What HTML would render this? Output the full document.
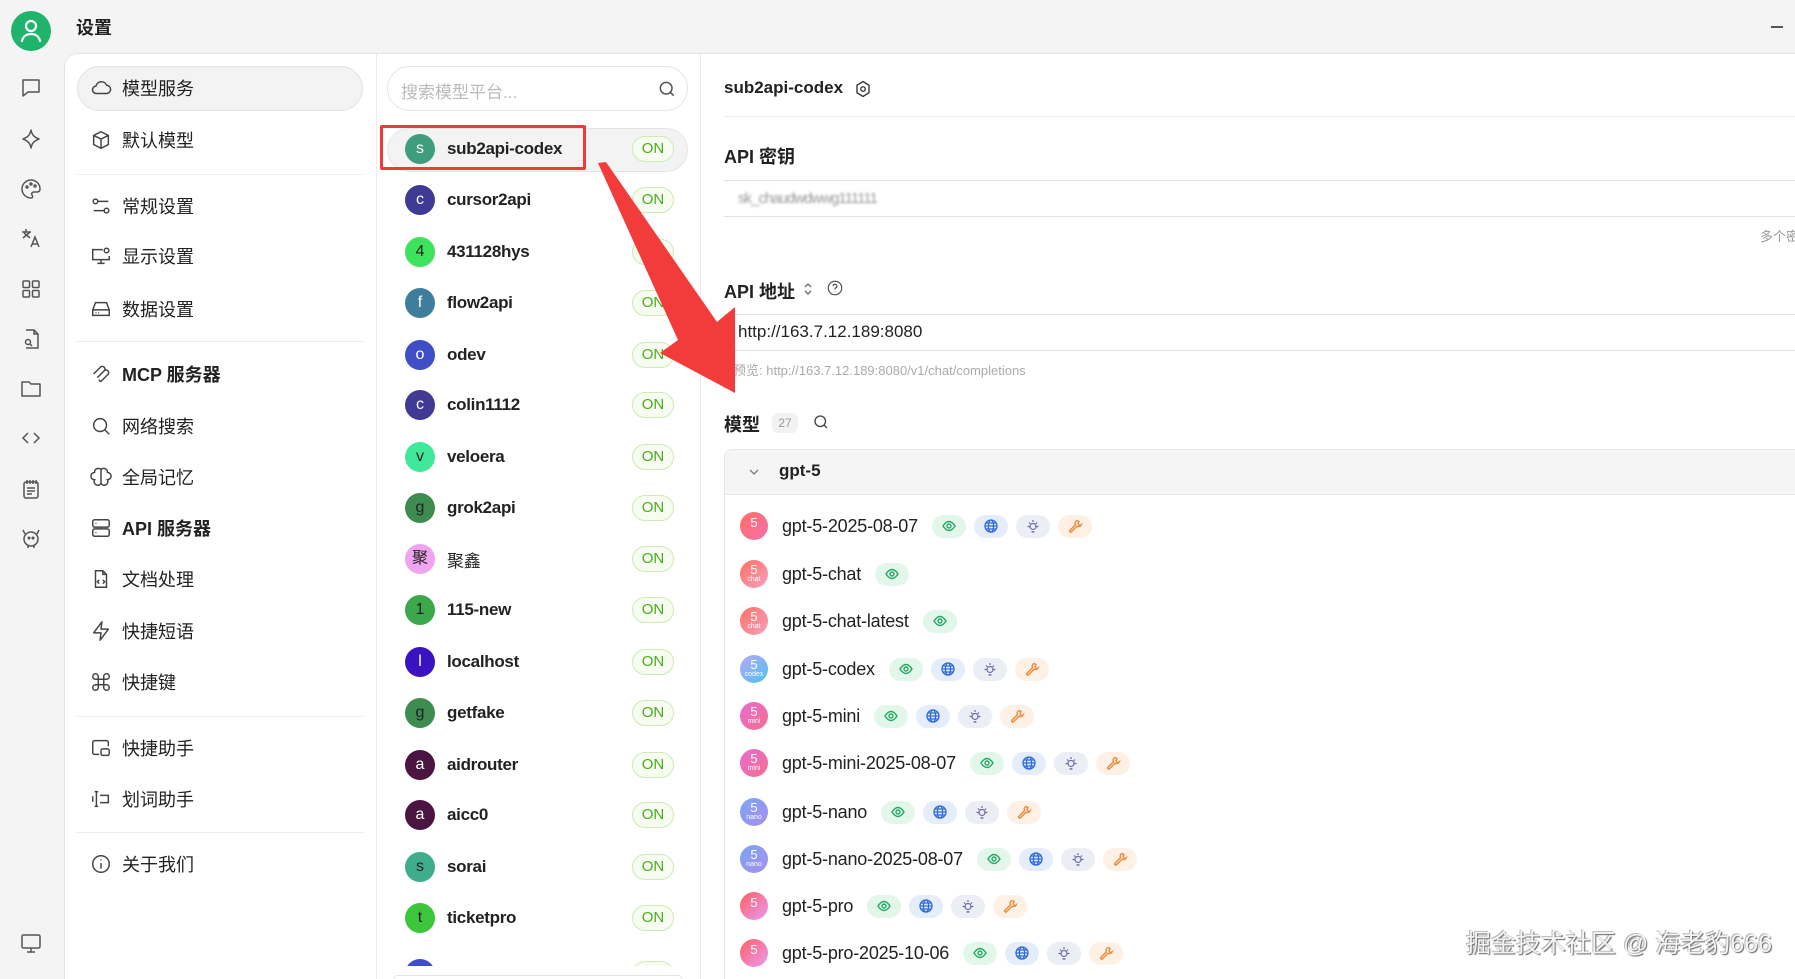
<!DOCTYPE html>
<html style="overflow:hidden"><head><meta charset="utf-8"><style>
*{margin:0;padding:0;box-sizing:border-box}
body{width:1795px;height:979px;overflow:hidden;background:#f4f4f4;font-family:"Liberation Sans","Noto Sans CJK SC",sans-serif;color:#222;position:relative}
.abs{position:absolute}
svg{display:block}
.ic{position:absolute;left:19px;width:24px;height:24px}
.panel{position:absolute;left:64px;top:53px;width:1740px;height:940px;background:#fff;border-top:1px solid #e4e4e4;border-left:1px solid #e4e4e4;border-top-left-radius:14px}
.nav{position:absolute;left:0;width:376px;height:44px;display:flex;align-items:center;font-size:18px;color:#222}
.nav svg{position:absolute;left:90px;width:22px;height:22px}
.nav span{position:absolute;left:122px;white-space:nowrap}
.div{position:absolute;height:1px;background:#ececec}
.prow{position:absolute;left:387px;width:300px;height:44px}
.pav{position:absolute;left:18px;top:7px;width:30px;height:30px;border-radius:50%;color:#fff;font-size:16px;text-align:center;line-height:30px}
.pname{position:absolute;left:60px;top:12px;font-size:17px;font-weight:bold;color:#222;letter-spacing:-0.3px;white-space:nowrap}
.on{position:absolute;left:245px;top:9px;width:42px;height:26px;border:1px solid #cfe9b9;background:#f6fdf0;border-radius:13px;color:#4caa22;font-size:15px;text-align:center;line-height:24px}
.mrow{position:absolute;left:740px;height:40px;display:flex;align-items:center;white-space:nowrap;width:1000px}
.mav{width:28px;height:28px;border-radius:50%;color:#fff;font-size:13px;text-align:center;line-height:13px;padding-top:3px;margin-right:14px;flex:none}
.mav small{display:block;font-size:7px;line-height:8px}
.mname{font-size:18px;color:#222;margin-right:14px;letter-spacing:-0.2px;white-space:nowrap;flex:none}
.tag{width:34px;height:23px;border-radius:12px;margin-right:8px;display:flex;align-items:center;justify-content:center;flex:none}
.t1{background:#e2f6ea}.t2{background:#e5edfb}.t3{background:#eceef5}.t4{background:#fdf0e5}
</style></head><body>

<div class="abs" style="left:11px;top:11px;width:40px;height:40px;border-radius:50%;background:#1fb36b">
<svg width="40" height="40" viewBox="0 0 40 40"><circle cx="20" cy="15" r="5" fill="none" stroke="#fff" stroke-width="2.2"/><path d="M11 30c1-5 5-7 9-7s8 2 9 7" fill="none" stroke="#fff" stroke-width="2.2" stroke-linecap="round"/></svg></div>
<div class="abs" style="left:76px;top:14px;font-size:18px;font-weight:bold">设置</div>
<div class="abs" style="left:1771px;top:26px;width:12px;height:1.5px;background:#555"></div>

<svg class="ic" style="top:76px" viewBox="0 0 24 24" fill="none" stroke="#555" stroke-width="1.5"><path d="M4 4h16v12H9l-5 4z" stroke-linejoin="round"/></svg>
<svg class="ic" style="top:127px" viewBox="0 0 24 24" fill="none" stroke="#555" stroke-width="1.5"><path d="M12 3c1 5 3 7 8 9-5 2-7 4-8 9-1-5-3-7-8-9 5-2 7-4 8-9z" stroke-linejoin="round"/></svg>
<svg class="ic" style="top:177px" viewBox="0 0 24 24" fill="none" stroke="#555" stroke-width="1.5"><path d="M12 3a9 9 0 1 0 0 18c2 0 2-2 1-3s0-3 2-3h3c2 0 3-1 3-3 0-5-4-9-9-9z"/><circle cx="8" cy="10" r="1"/><circle cx="12" cy="7" r="1"/><circle cx="16" cy="9" r="1"/></svg>
<svg class="ic" style="top:226px" viewBox="0 0 24 24" fill="none" stroke="#555" stroke-width="1.5"><path d="M3 6h9M7 3v3M4 12l7-6M5 7l6 5M12 21l4-10 4 10M13.5 18h5"/></svg>
<svg class="ic" style="top:277px" viewBox="0 0 24 24" fill="none" stroke="#555" stroke-width="1.5"><rect x="4" y="4" width="6.5" height="6.5" rx="1"/><rect x="13.5" y="4" width="6.5" height="6.5" rx="1"/><rect x="4" y="13.5" width="6.5" height="6.5" rx="1"/><rect x="13.5" y="13.5" width="6.5" height="6.5" rx="1"/></svg>
<svg class="ic" style="top:327px" viewBox="0 0 24 24" fill="none" stroke="#555" stroke-width="1.5"><path d="M7 3h8l4 4v14H7"/><path d="M15 3v4h4"/><circle cx="9" cy="15" r="2.5"/><path d="M11 17l2 2"/></svg>
<svg class="ic" style="top:376px" viewBox="0 0 24 24" fill="none" stroke="#555" stroke-width="1.5"><path d="M3 6h7l2 2h9v12H3z" stroke-linejoin="round"/></svg>
<svg class="ic" style="top:426px" viewBox="0 0 24 24" fill="none" stroke="#555" stroke-width="1.5"><path d="M9 7l-5 5 5 5M15 7l5 5-5 5"/></svg>
<svg class="ic" style="top:477px" viewBox="0 0 24 24" fill="none" stroke="#555" stroke-width="1.5"><rect x="5" y="5" width="14" height="16" rx="2"/><path d="M8 3v4M11 3v4M14 3v4M17 3v4M8 11h8M8 14h8M8 17h5"/></svg>
<svg class="ic" style="top:526px" viewBox="0 0 24 24" fill="none" stroke="#555" stroke-width="1.5"><circle cx="12" cy="13" r="7"/><path d="M6 8L4 4M18 8l2-4M9 20v2M15 20v2"/><circle cx="10" cy="12" r=".8" fill="#555"/><circle cx="14" cy="12" r=".8" fill="#555"/></svg>
<svg class="ic" style="top:931px" viewBox="0 0 24 24" fill="none" stroke="#555" stroke-width="1.5"><rect x="3" y="4" width="18" height="13" rx="1.5"/><path d="M12 17v4M8 21h8"/></svg>

<div class="panel"></div>
<div class="abs" style="left:376px;top:54px;width:1px;height:925px;background:#ececec"></div>
<div class="abs" style="left:700px;top:54px;width:1px;height:925px;background:#ececec"></div>

<div class="abs" style="left:77px;top:66px;width:286px;height:45px;border-radius:23px;background:#f3f3f3;border:1px solid #e2e2e2"></div>
<div class="nav" style="top:66px"><svg viewBox="0 0 24 24" fill="none" stroke="#444" stroke-width="1.6"><path d="M7 18a4 4 0 0 1-.5-8A6 6 0 0 1 18 9a4.5 4.5 0 0 1 0 9z"/></svg><span>模型服务</span></div>
<div class="nav" style="top:118px"><svg viewBox="0 0 24 24" fill="none" stroke="#444" stroke-width="1.6"><path d="M12 3l8 4v10l-8 4-8-4V7zM4 7l8 4 8-4M12 11v10"/></svg><span>默认模型</span></div>
<div class="div" style="left:77px;top:174px;width:286px"></div>
<div class="nav" style="top:184px"><svg viewBox="0 0 24 24" fill="none" stroke="#444" stroke-width="1.6"><circle cx="6" cy="7" r="2.5"/><path d="M9 7h11M4 17h11"/><circle cx="18" cy="17" r="2.5"/></svg><span>常规设置</span></div>
<div class="nav" style="top:234px"><svg viewBox="0 0 24 24" fill="none" stroke="#444" stroke-width="1.6"><path d="M14 5H3v11h18v-4M12 16v4M8 20h8"/><circle cx="18" cy="6" r="2.5"/></svg><span>显示设置</span></div>
<div class="nav" style="top:287px"><svg viewBox="0 0 24 24" fill="none" stroke="#444" stroke-width="1.6"><path d="M3 13l3-8h12l3 8v6H3zM3 13h18M6 16h1M9 16h1"/></svg><span>数据设置</span></div>
<div class="div" style="left:77px;top:341px;width:286px"></div>
<div class="nav" style="top:352px"><svg viewBox="0 0 24 24" fill="none" stroke="#444" stroke-width="1.6"><path d="M4 12l8-8a3 3 0 0 1 4 4l-7 7M8 16l8-8a3 3 0 0 1 4 4l-8 8a2 2 0 0 1-2-2"/></svg><span style="font-weight:bold">MCP 服务器</span></div>
<div class="nav" style="top:404px"><svg viewBox="0 0 24 24" fill="none" stroke="#444" stroke-width="1.6"><circle cx="11" cy="11" r="7"/><path d="M16 16l5 5"/></svg><span>网络搜索</span></div>
<div class="nav" style="top:455px"><svg viewBox="0 0 24 24" fill="none" stroke="#444" stroke-width="1.6"><path d="M12 4a4 4 0 0 0-7 3 4 4 0 0 0 0 8 4 4 0 0 0 7 4zM12 4a4 4 0 0 1 7 3 4 4 0 0 1 0 8 4 4 0 0 1-7 4zM12 4v16"/></svg><span>全局记忆</span></div>
<div class="nav" style="top:506px"><svg viewBox="0 0 24 24" fill="none" stroke="#444" stroke-width="1.6"><rect x="3" y="3" width="18" height="8" rx="2"/><rect x="3" y="13" width="18" height="8" rx="2"/><path d="M6 7h1M6 17h1"/></svg><span style="font-weight:bold">API 服务器</span></div>
<div class="nav" style="top:557px"><svg viewBox="0 0 24 24" fill="none" stroke="#444" stroke-width="1.6"><path d="M14 3H6v18h12V7zM14 3v4h4M10 13l-2 2 2 2M14 13l2 2-2 2"/></svg><span>文档处理</span></div>
<div class="nav" style="top:609px"><svg viewBox="0 0 24 24" fill="none" stroke="#444" stroke-width="1.6"><path d="M13 2L4 14h8l-1 8 9-12h-8z" stroke-linejoin="round"/></svg><span>快捷短语</span></div>
<div class="nav" style="top:660px"><svg viewBox="0 0 24 24" fill="none" stroke="#444" stroke-width="1.6"><path d="M9 9V6a3 3 0 1 0-3 3h12a3 3 0 1 0-3-3v12a3 3 0 1 0 3-3H6a3 3 0 1 0 3 3z"/></svg><span>快捷键</span></div>
<div class="div" style="left:77px;top:716px;width:286px"></div>
<div class="nav" style="top:726px"><svg viewBox="0 0 24 24" fill="none" stroke="#444" stroke-width="1.6"><path d="M10 19H5a2 2 0 0 1-2-2V6a2 2 0 0 1 2-2h13a2 2 0 0 1 2 2v4"/><rect x="12" y="13" width="9" height="7" rx="2"/></svg><span>快捷助手</span></div>
<div class="nav" style="top:777px"><svg viewBox="0 0 24 24" fill="none" stroke="#444" stroke-width="1.6"><path d="M7 4v16M5 4h4M5 20h4M11 8h9v8h-9M3 9v6"/></svg><span>划词助手</span></div>
<div class="div" style="left:77px;top:832px;width:286px"></div>
<div class="nav" style="top:842px"><svg viewBox="0 0 24 24" fill="none" stroke="#444" stroke-width="1.6"><circle cx="12" cy="12" r="9"/><path d="M12 11v6M12 7v1"/></svg><span>关于我们</span></div>

<div class="abs" style="left:387px;top:66px;width:301px;height:45px;border-radius:23px;border:1px solid #e6e6e6"></div>
<div class="abs" style="left:401px;top:78px;font-size:17px;color:#bbb">搜索模型平台...</div>
<svg class="abs" style="left:657px;top:79px" width="20" height="20" viewBox="0 0 24 24" fill="none" stroke="#555" stroke-width="1.8"><circle cx="11" cy="11" r="7"/><path d="M16 16l4 4"/></svg>

<div class="abs" style="left:387px;top:128px;width:301px;height:44px;border-radius:22px;background:#f3f3f3;border:1px solid #e4e4e4"></div>
<div class="prow" style="top:127px"><div class="pav" style="background:#3e9d7c">s</div><div class="pname">sub2api-codex</div><div class="on">ON</div></div>
<div class="prow" style="top:178px"><div class="pav" style="background:#3f3a93">c</div><div class="pname">cursor2api</div><div class="on">ON</div></div>
<div class="prow" style="top:230px"><div class="pav" style="background:#3ee35d;color:#222">4</div><div class="pname">431128hys</div><div class="on">ON</div></div>
<div class="prow" style="top:281px"><div class="pav" style="background:#3e7e9c">f</div><div class="pname">flow2api</div><div class="on">ON</div></div>
<div class="prow" style="top:333px"><div class="pav" style="background:#3d4ec6">o</div><div class="pname">odev</div><div class="on">ON</div></div>
<div class="prow" style="top:383px"><div class="pav" style="background:#403a95">c</div><div class="pname">colin1112</div><div class="on">ON</div></div>
<div class="prow" style="top:435px"><div class="pav" style="background:#40e89a;color:#222">v</div><div class="pname">veloera</div><div class="on">ON</div></div>
<div class="prow" style="top:486px"><div class="pav" style="background:#3f8c50;color:#222">g</div><div class="pname">grok2api</div><div class="on">ON</div></div>
<div class="prow" style="top:537px"><div class="pav" style="background:#f0a3ef;color:#222">聚</div><div class="pname" style="font-weight:normal;top:10px">聚鑫</div><div class="on">ON</div></div>
<div class="prow" style="top:588px"><div class="pav" style="background:#3aa84b;color:#222">1</div><div class="pname">115-new</div><div class="on">ON</div></div>
<div class="prow" style="top:640px"><div class="pav" style="background:#3a12c2">l</div><div class="pname">localhost</div><div class="on">ON</div></div>
<div class="prow" style="top:691px"><div class="pav" style="background:#3f8c50;color:#222">g</div><div class="pname">getfake</div><div class="on">ON</div></div>
<div class="prow" style="top:743px"><div class="pav" style="background:#4b1541">a</div><div class="pname">aidrouter</div><div class="on">ON</div></div>
<div class="prow" style="top:793px"><div class="pav" style="background:#4b1541">a</div><div class="pname">aicc0</div><div class="on">ON</div></div>
<div class="prow" style="top:845px"><div class="pav" style="background:#3fac8c;color:#222">s</div><div class="pname">sorai</div><div class="on">ON</div></div>
<div class="prow" style="top:896px"><div class="pav" style="background:#3dc53b;color:#222">t</div><div class="pname">ticketpro</div><div class="on">ON</div></div>
<div class="abs" style="left:387px;top:944px;width:301px;height:22px;overflow:hidden"><div class="prow" style="left:0;top:8px"><div class="pav" style="background:#3d4ec6"></div><div class="on"></div></div></div>
<div class="abs" style="left:393px;top:975px;width:290px;height:10px;border-radius:8px;border:1px solid #e4e4e4"></div>

<div class="abs" style="left:380px;top:125px;width:206px;height:45px;border:3px solid #f03a3a;border-radius:2px"></div>

<div class="abs" style="left:724px;top:78px;font-size:17px;font-weight:bold">sub2api-codex</div>
<svg class="abs" style="left:854px;top:80px" width="18" height="18" viewBox="0 0 24 24" fill="none" stroke="#333" stroke-width="1.8"><path d="M12 2l8 5v10l-8 5-8-5V7z"/><circle cx="12" cy="12" r="3"/></svg>
<div class="div" style="left:724px;top:116px;width:1071px"></div>
<div class="abs" style="left:724px;top:143px;font-size:18px;font-weight:bold">API 密钥</div>
<div class="abs" style="left:724px;top:180px;width:1071px;height:37px;border-top:1px solid #e2e2e2;border-bottom:1px solid #e2e2e2"></div>
<div class="abs" style="left:738px;top:190px;font-size:15px;color:#999;letter-spacing:-1px;filter:blur(1.2px)">sk_chaudwdwwg111111</div>
<div class="abs" style="left:1760px;top:226px;font-size:13px;color:#999;white-space:nowrap">多个密</div>
<div class="abs" style="left:724px;top:278px;font-size:18px;font-weight:bold">API 地址</div>
<svg class="abs" style="left:800px;top:280px" width="16" height="18" viewBox="0 0 16 18" fill="none" stroke="#666" stroke-width="1.3"><path d="M5 7l3-3 3 3M5 11l3 3 3-3"/></svg>
<svg class="abs" style="left:826px;top:279px" width="18" height="18" viewBox="0 0 24 24" fill="none" stroke="#555" stroke-width="1.6"><circle cx="12" cy="12" r="9"/><path d="M9.5 9.5a2.5 2.5 0 1 1 3.5 2.3c-.7.3-1 .8-1 1.5V14M12 17v.5"/></svg>
<div class="abs" style="left:724px;top:314px;width:1071px;height:37px;border-top:1px solid #e2e2e2;border-bottom:1px solid #e2e2e2"></div>
<div class="abs" style="left:738px;top:322px;font-size:17px;color:#222">http://163.7.12.189:8080</div>
<div class="abs" style="left:733px;top:360px;font-size:13px;color:#aaa">预览: http://163.7.12.189:8080/v1/chat/completions</div>
<div class="abs" style="left:724px;top:411px;font-size:18px;font-weight:bold">模型</div>
<div class="abs" style="left:772px;top:413px;width:26px;height:20px;border-radius:6px;background:#f2f2f2;color:#999;font-size:12px;text-align:center;line-height:20px">27</div>
<svg class="abs" style="left:812px;top:413px" width="18" height="18" viewBox="0 0 24 24" fill="none" stroke="#444" stroke-width="1.8"><circle cx="11" cy="11" r="7"/><path d="M16 16l4 4"/></svg>

<div class="abs" style="left:724px;top:449px;width:1080px;height:540px;border:1px solid #e6e6e6;border-radius:8px"></div>
<div class="abs" style="left:725px;top:450px;width:1070px;height:45px;background:#f5f5f5;border-bottom:1px solid #e6e6e6;border-top-left-radius:8px"></div>
<svg class="abs" style="left:747px;top:465px" width="14" height="14" viewBox="0 0 14 14" fill="none" stroke="#777" stroke-width="1.3"><path d="M3 5l4 4 4-4"/></svg>
<div class="abs" style="left:779px;top:461px;font-size:17px;font-weight:bold">gpt-5</div>

<svg width="0" height="0" style="position:absolute;left:0;top:0">
<defs>
<g id="eye"><path d="M2 8c2-3 4-4.5 6-4.5S12 5 14 8c-2 3-4 4.5-6 4.5S4 11 2 8z" fill="none" stroke="#27a766" stroke-width="1.4"/><circle cx="8" cy="8" r="2" fill="none" stroke="#27a766" stroke-width="1.4"/></g>
<g id="globe" fill="none" stroke="#2f6ad8" stroke-width="1.3"><circle cx="8" cy="8" r="6"/><ellipse cx="8" cy="8" rx="2.6" ry="6"/><path d="M2 8h12M3 5h10M3 11h10"/></g>
<g id="sun" fill="none" stroke="#6a6ea6" stroke-width="1.2"><circle cx="8" cy="8.5" r="3"/><path d="M8 2v2M8 13v1.5M2.5 8.5h2M11.5 8.5h2M4 4.5l1.3 1.3M12 4.5l-1.3 1.3M6.5 14h3"/></g>
<g id="wr" fill="none" stroke="#ea8a3a" stroke-width="1.4"><path d="M10 2.5a3 3 0 0 0-1.5 4.2L3 12.2a1 1 0 0 0 1.5 1.5l5.5-5.5a3 3 0 0 0 4.2-1.5L12.5 8 11 5.5 12 3.5z"/></g>
</defs></svg>

<div id="models" style="position:absolute;left:0;top:0;width:1795px;height:979px"></div>
<script>
const rows=[
["gpt-5-2025-08-07","",4,"#ff6f61,#f86fb0"],
["gpt-5-chat","chat",1,"#ff6f61,#f7a0c0"],
["gpt-5-chat-latest","chat",1,"#ff6f61,#f7a0c0"],
["gpt-5-codex","codex",4,"#b8a6f5,#4cc4f0"],
["gpt-5-mini","mini",4,"#e86ad0,#f37090"],
["gpt-5-mini-2025-08-07","mini",4,"#e86ad0,#f37090"],
["gpt-5-nano","nano",4,"#7aa6f2,#a78ef0"],
["gpt-5-nano-2025-08-07","nano",4,"#7aa6f2,#a78ef0"],
["gpt-5-pro","",4,"#ff6060,#e89af5"],
["gpt-5-pro-2025-10-06","",4,"#ff6060,#e89af5"]];
const ys=[506,554,601,649,696,743,792,839,886,933];
let h="";
const icons=["eye","globe","sun","wr"];
rows.forEach((r,i)=>{
 let tags="";
 for(let k=0;k<r[2];k++)tags+=`<div class="tag t${k+1}"><svg width="16" height="16" viewBox="0 0 16 16"><use href="#${icons[k]}"/></svg></div>`;
 h+=`<div class="mrow" style="top:${ys[i]}px"><div class="mav" style="background:linear-gradient(135deg,${r[3]});${r[1]?'':'line-height:22px;padding-top:0'}">5${r[1]?'<small>'+r[1]+'</small>':''}</div><div class="mname">${r[0]}</div>${tags}</div>`;
});
document.getElementById("models").innerHTML=h;
</script>

<svg class="abs" style="left:0;top:0" width="1795" height="979"><polygon points="598,163 606,162 717,322 735,307 735,393 660,353 678,340" fill="#f23b3b"/></svg>

<div class="abs" style="left:1466px;top:924px;font-size:25px;color:#f4f4f4;text-shadow:1px 1px 1px #666,-1px -1px 0 #bbb;white-space:nowrap">掘金技术社区 @ 海老豹666</div>
</body></html>
